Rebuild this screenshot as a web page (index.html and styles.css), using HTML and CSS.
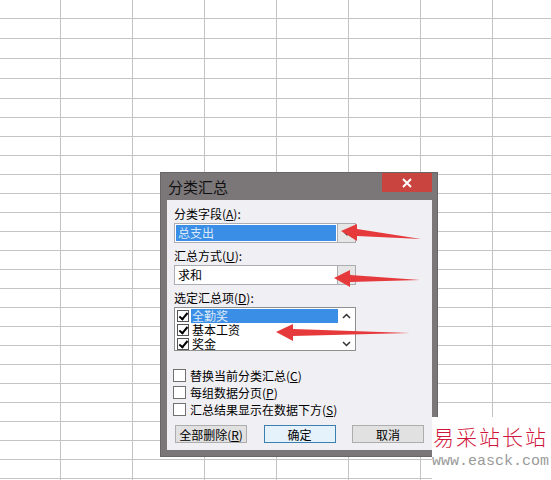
FILE: index.html
```html
<!DOCTYPE html>
<html lang="zh-CN">
<head>
    <meta charset="UTF-8">
    <title>分类汇总</title>
    <link rel="stylesheet" href="styles.css">
</head>
<body>

<div class="hoja">

    <!-- Ventana de diálogo -->
    <div class="dialogo">
        <div class="barra-titulo">
            <span class="titulo">分类汇总</span>
            <span class="cerrar">
                <svg width="10" height="10" viewBox="0 0 10 10"><path d="M1 1L9 9M9 1L1 9" stroke="#fff" stroke-width="2"/></svg>
            </span>
        </div>

        <div class="cliente">
            <div class="etiqueta">分类字段(<u>A</u>):</div>
            <div class="combo">
                <span class="valor seleccionado">总支出</span>
                <span class="desplegar">
                    <svg width="8" height="5" viewBox="0 0 8 5"><path d="M1 1L4 4L7 1" fill="none" stroke="#333" stroke-width="1.2"/></svg>
                </span>
            </div>

            <div class="etiqueta">汇总方式(<u>U</u>):</div>
            <div class="combo">
                <span class="valor">求和</span>
                <span class="desplegar">
                    <svg width="8" height="5" viewBox="0 0 8 5"><path d="M1 1L4 4L7 1" fill="none" stroke="#333" stroke-width="1.2"/></svg>
                </span>
            </div>

            <div class="etiqueta">选定汇总项(<u>D</u>):</div>
            <div class="lista">
                <div class="items">
                    <div class="item"><span class="check marcado"></span><span class="texto seleccionado">全勤奖</span></div>
                    <div class="item"><span class="check marcado"></span><span class="texto">基本工资</span></div>
                    <div class="item"><span class="check marcado"></span><span class="texto">奖金</span></div>
                </div>
                <div class="scroll">
                    <svg width="9" height="6" viewBox="0 0 9 6"><path d="M1 5L4.5 1.5L8 5" fill="none" stroke="#333" stroke-width="1.5"/></svg>
                    <svg width="9" height="6" viewBox="0 0 9 6"><path d="M1 1L4.5 4.5L8 1" fill="none" stroke="#333" stroke-width="1.5"/></svg>
                </div>
            </div>

            <div class="opciones">
                <label class="opcion"><span class="caja"></span>替换当前分类汇总(<u>C</u>)</label>
                <label class="opcion"><span class="caja"></span>每组数据分页(<u>P</u>)</label>
                <label class="opcion"><span class="caja"></span>汇总结果显示在数据下方(<u>S</u>)</label>
            </div>

            <div class="botones">
                <button class="boton">全部删除(<u>R</u>)</button>
                <button class="boton principal">确定</button>
                <button class="boton">取消</button>
            </div>
        </div>
    </div>

    <!-- Flechas rojas encima -->
    <svg class="flechas" width="551" height="480" viewBox="0 0 551 480">
        <polygon points="341,231 357,224 357,229 421,239 357,236 357,241" fill="#e6393b"/>
        <polygon points="334,278 350,270 350,275 420,280 350,282 350,287" fill="#e6393b"/>
        <polygon points="276,332 293,324 293,329 410,333 293,336 293,341" fill="#e6393b"/>
    </svg>

    <div class="marca">
        <div class="marca-nombre">易采站长站</div>
        <div class="marca-url">www.easck.com</div>
    </div>
</div>

</body>
</html>
```

FILE: styles.css
```css
/* Hoja de cálculo de fondo */
body {
    margin: 0;
    background-color: #ffffff;
    font-family: "Noto Sans CJK SC", sans-serif;
    font-size: 12px;
    color: #000;
}

.hoja {
    position: relative;
    width: 551px;
    height: 480px;
    overflow: hidden;
    background-color: #ffffff;
    background-image:
        repeating-linear-gradient(90deg, transparent 0 60px, #c4c4c4 60px 61px, transparent 61px 72px),
        repeating-linear-gradient(180deg, transparent 0 18px, #c4c4c4 18px 19px, transparent 19px 20px),
        repeating-linear-gradient(180deg, transparent 0 18px, #c4c4c4 18px 19px);
    background-size: 72px 100%, 100% 99px, 100% 381px;
    background-position: 0 0, 0 0, 0 99px;
    background-repeat: repeat-x, no-repeat, no-repeat;
}

/* Ventana del diálogo */
.dialogo {
    position: absolute;
    left: 160px;
    top: 172px;
    width: 278px;
    height: 285px;
    background-color: #7b7779;
    box-sizing: border-box;
    border: 1px solid #6a6668;
    display: flex;
    flex-direction: column;
}

.barra-titulo {
    height: 27px;
    display: flex;
    justify-content: space-between;
    align-items: flex-start;
}

.titulo {
    padding: 4px 0 0 7px;
    font-size: 15px;
    line-height: 20px;
    color: #111;
}

.cerrar {
    width: 50px;
    height: 19px;
    margin-right: 5px;
    background-color: #c9443f;
    display: flex;
    justify-content: center;
    align-items: center;
}

.cliente {
    flex: 1;
    margin: 0 5px 6px 6px;
    background-color: #f0eff4;
    padding: 7px 8px 0 7px;
    display: flex;
    flex-direction: column;
}

.etiqueta {
    line-height: 14px;
    height: 14px;
    margin-bottom: 2px;
}

.combo {
    height: 20px;
    width: 182px;
    box-sizing: border-box;
    border: 1px solid #abadb3;
    background-color: #fff;
    display: flex;
    align-items: stretch;
    margin-bottom: 6px;
}

.valor {
    flex: 1;
    margin: 1px;
    padding-left: 2px;
    line-height: 16px;
}

.seleccionado {
    background-color: #3a8ee6;
    color: #dbe9f8;
}

.desplegar {
    width: 17px;
    border-left: 1px solid #abadb3;
    background-color: #e6e6e6;
    display: flex;
    justify-content: center;
    align-items: center;
}

/* Lista con casillas */
.lista {
    width: 182px;
    height: 44px;
    box-sizing: border-box;
    border: 1px solid #8e8f8f;
    background-color: #fff;
    display: flex;
    margin-bottom: 18px;
}

.items {
    flex: 1;
    padding: 1px 0 0 2px;
}

.item {
    height: 14px;
    display: flex;
    align-items: center;
}

.check {
    width: 10px;
    height: 10px;
    border: 1px solid #555;
    margin-right: 2px;
    background-color: #fff;
    position: relative;
}

.check.marcado::after {
    content: "";
    position: absolute;
    left: 3px;
    top: 0;
    width: 3px;
    height: 7px;
    border-right: 2px solid #000;
    border-bottom: 2px solid #000;
    transform: rotate(40deg);
}

.texto {
    flex: 1;
    height: 14px;
    line-height: 14px;
    padding-left: 1px;
}

.scroll {
    width: 17px;
    display: flex;
    flex-direction: column;
    justify-content: space-between;
    align-items: center;
    padding: 5px 0 3px;
}

/* Opciones de casilla */
.opciones {
    display: flex;
    flex-direction: column;
    margin-left: -1px;
}

.opcion {
    height: 17px;
    display: flex;
    align-items: flex-start;
    line-height: 13px;
}

.caja {
    width: 11px;
    height: 11px;
    border: 1px solid #707070;
    background-color: #fff;
    margin-right: 4px;
}

/* Botones */
.botones {
    display: flex;
    justify-content: space-between;
    margin-top: 5px;
    padding-left: 1px;
}

.boton {
    width: 72px;
    height: 18px;
    padding: 0;
    border: 1px solid #adadad;
    background-color: #e1e1e1;
    font-family: "Noto Sans CJK SC", sans-serif;
    font-size: 12px;
    line-height: 15px;
    color: #000;
}

.boton.principal {
    border-color: #3c7fb1;
    background-color: #e5f1fb;
}

/* Flechas y marca de agua */
.flechas {
    position: absolute;
    left: 0;
    top: 0;
    pointer-events: none;
}

.marca {
    position: absolute;
    left: 432px;
    top: 417px;
    width: 119px;
    height: 63px;
    background-color: #fff;
    white-space: nowrap;
}

.marca-nombre {
    margin-top: 6px;
    padding-left: 1px;
    font-size: 21px;
    line-height: 26px;
    letter-spacing: 2px;
    color: #d1163d;
    font-weight: 300;
}

.marca-url {
    margin-top: 5px;
    font-family: "Liberation Mono", monospace;
    font-size: 15px;
    line-height: 16px;
    color: #9a9a9a;
}
```
